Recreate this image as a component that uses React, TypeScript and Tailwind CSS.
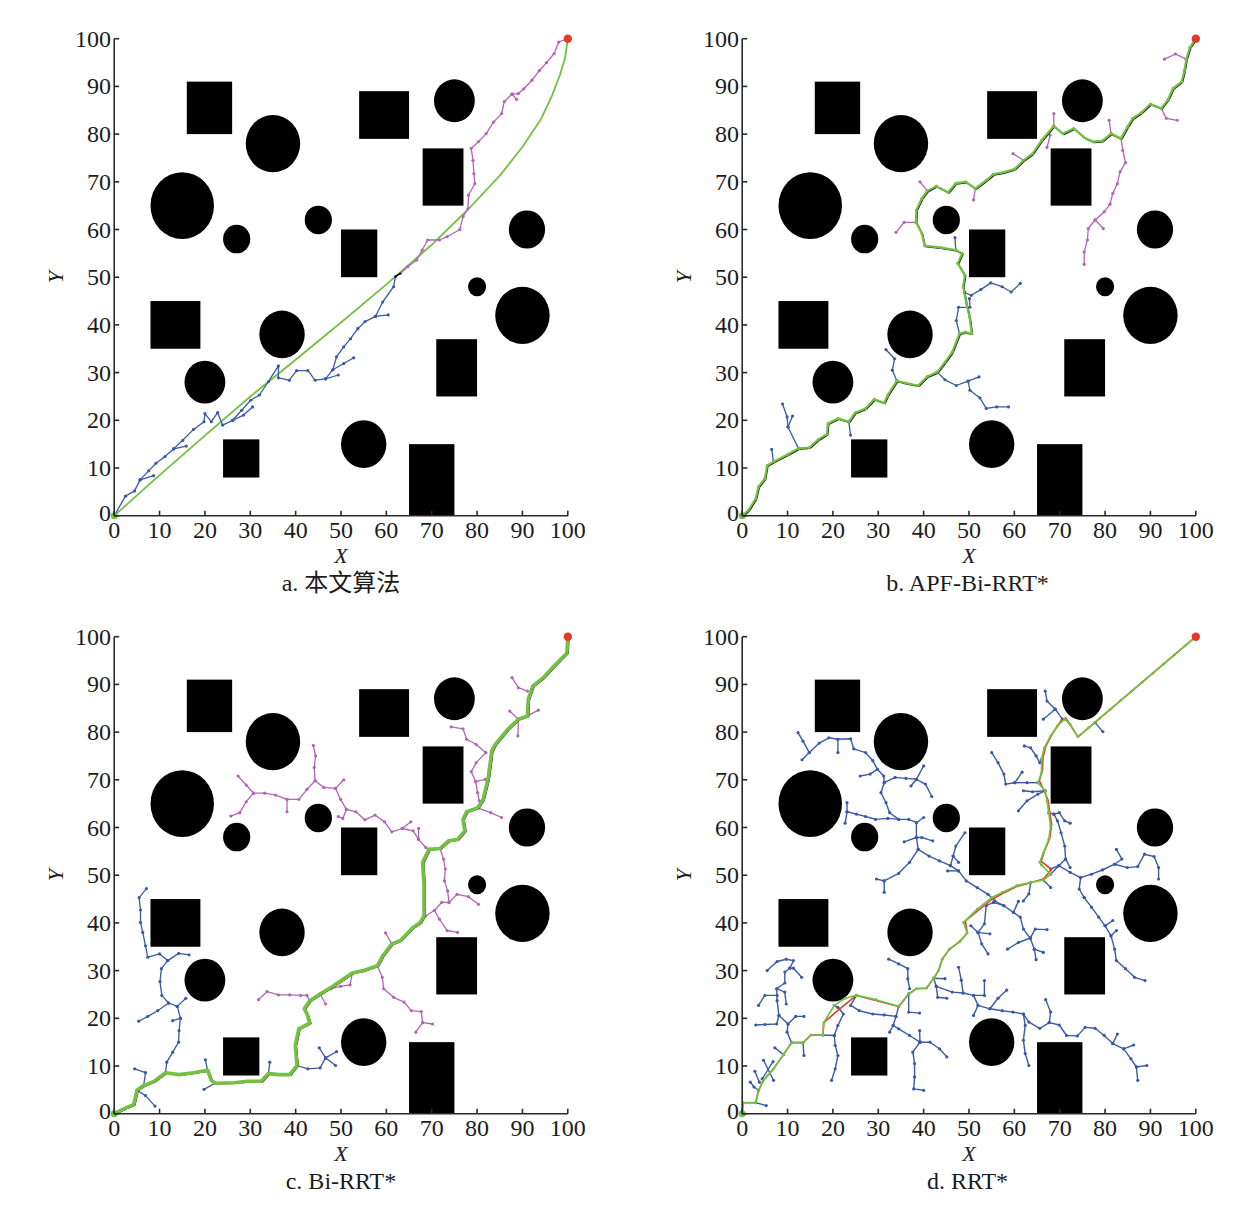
import React from "react";

type P = [number, number];
type Line = P[];

// plot frame, in px inside each panel's svg
const X0 = 114.2;
const Y0 = 515.7;
const SX = 4.536;
const SY = 4.77;
const px = (x: number) => X0 + x * SX;
const py = (y: number) => Y0 - y * SY;
const pts = (l: Line) =>
  l.map(([x, y]) => `${px(x).toFixed(1)},${py(y).toFixed(1)}`).join(" ");

const BLUE = "#3a5aa6";
const PURPLE = "#b264b8";
const GREEN = "#74c043";
const RED = "#e5392b";
const SERIF = "'Liberation Serif', 'Noto Sans CJK SC', serif";

const RECTS = [
  [16, 80, 26, 91],
  [54, 79, 65, 89],
  [68, 65, 77, 77],
  [50, 50, 58, 60],
  [8, 35, 19, 45],
  [71, 25, 80, 37],
  [24, 8, 32, 16],
  [65, 0, 75, 15],
];

const CIRCLES = [
  [35, 78, 6],
  [75, 87, 4.5],
  [15, 65, 7],
  [27, 58, 3],
  [45, 62, 3],
  [91, 60, 4],
  [80, 48, 2],
  [90, 42, 6],
  [37, 38, 5],
  [20, 28, 4.5],
  [55, 15, 5],
];

const TICKS = [0, 10, 20, 30, 40, 50, 60, 70, 80, 90, 100];

// ---------- a ----------
const greenA: Line = [
  [0, 0], [10, 8.5], [20, 16.8], [30, 25], [40, 32.7], [50, 40.5], [60, 48.5],
  [70, 56.8], [78, 64.2], [85, 71.3], [90, 77.3], [94, 83], [96.5, 88],
  [98.3, 92.5], [99.4, 96], [100, 100],
];
const blueA: Line[] = [
  [
    [0, 0], [2.5, 4.1], [4.5, 5.2], [5.7, 7.5], [7.6, 9.4], [9.2, 11], [11.2, 12.4],
    [13.1, 14], [15.1, 15.8], [17.5, 18.1], [19.8, 19.7], [20, 21.4], [21.4, 19.7],
    [22.8, 21.6], [23.9, 19], [26.1, 20], [28.1, 22.1], [30.1, 24.2], [32, 25.3],
    [34, 28.1], [36.2, 31.4], [36.2, 28.9], [38.6, 28.4], [40.2, 30.4], [42.7, 30.4],
    [44.3, 28.4], [46.6, 28.7], [48.2, 30.6], [49, 33.3], [50.6, 35.4], [52.1, 37.1],
    [53.7, 39.2], [55.3, 40.7], [57.6, 41.8], [59.2, 44.8], [61.6, 48], [62, 50.1],
  ],
  [[5.7, 7.5], [8.7, 8.4]],
  [[13.1, 14], [15.9, 14.6]],
  [[26.1, 20], [28.5, 21.1], [30.5, 22.8]],
  [[48.2, 30.6], [50.6, 31.9], [52.8, 33.1]],
  [[46.6, 28.7], [49.4, 29.5]],
  [[57.6, 41.8], [60.4, 42.1]],
];
const purpleA: Line[] = [
  [
    [100, 100], [98, 99.3], [97, 96.9], [95.3, 95], [93.7, 93.3], [92.1, 91.3],
    [90.3, 89.5], [89.1, 88.5], [87.7, 88.4], [86, 86.8], [85.4, 84.3], [83.6, 82.5],
    [82, 80.1], [80.3, 78.4], [78.7, 77], [79.1, 74.5], [79.3, 71.7], [79.5, 69.6],
    [78.1, 67.2], [78, 64.4], [76.9, 62.7], [76.2, 60], [73.4, 58.5], [71.7, 57.8],
    [69.1, 57.8], [67.9, 55.7], [66.7, 53.6], [64.7, 52.2], [63.1, 50.8],
  ],
  [[87.7, 88.4], [88.7, 87.3]],
];

// ---------- b ----------
const greenB: Line = [
  [0, 0], [1.4, 1.2], [3, 3.6], [3.6, 6.1], [5, 7.8], [5.5, 10.5], [6.9, 11.3],
  [10.1, 12.9], [12.4, 14.1], [14.8, 14.3], [16.8, 16], [18.7, 17.1], [18.9, 19.3],
  [21.1, 20.4], [23.5, 19.7], [24.9, 21.6], [27.2, 22.5], [29.1, 24.4], [31.3, 23.7],
  [32.1, 25.3], [34.1, 28.3], [36.1, 27.8], [38.8, 27.3], [40.8, 29.2], [43, 30.1],
  [44.7, 32.2], [46.3, 34.3], [47.9, 38.2], [49.1, 38.5], [50.6, 38.2], [50.1, 41.7],
  [49.4, 44.5], [48.7, 48], [49.1, 50.4], [47.5, 52.9], [48.5, 55], [47.1, 55.7],
  [43.9, 56.2], [40.2, 56.6], [39.6, 59.2], [38.3, 61.5], [38.4, 64.1], [39.6, 66.5],
  [40.8, 68.1], [42.8, 69.1], [45.4, 67.8], [47.1, 69.7], [49.3, 70], [51.4, 68.6],
  [53.8, 70.3], [55.4, 71.6], [58.1, 72.1], [60.1, 72.7], [62, 74.5], [64, 75.9],
  [66, 78.7], [68.7, 81.7], [70.7, 80.1], [73.1, 81.2], [75.4, 79.3], [77.4, 78.4],
  [79.4, 78.6], [81.3, 80.1], [83.5, 79.1], [84.9, 81.5], [86.1, 83.3], [88, 84.5],
  [90, 86.3], [92.4, 85.4], [93.9, 87.3], [95, 89.6], [96.9, 91], [97.5, 93.4],
  [97.9, 95.7], [98.7, 98.2], [100, 100],
];
const blueB: Line[] = [
  [[6.9, 11.3], [6.5, 13.9]],
  [[12.4, 14.1], [10.1, 18.6], [9.9, 20.7], [8.9, 23.4]],
  [[10.1, 18.6], [11.1, 20.9]],
  [[23.5, 19.7], [23.9, 16.9]],
  [[34.1, 28.3], [33.1, 30.5], [33.6, 32.9], [31.7, 34.8]],
  [[43, 30.1], [44.7, 28.5], [47.2, 27.3], [49.8, 28.2], [52.2, 29.1]],
  [[49.8, 28.2], [50.2, 26.3], [52.4, 24.7], [53.8, 22.5], [56.1, 22.8], [58.7, 22.8]],
  [[47.9, 38.2], [47.2, 40.9], [47.7, 43.7], [50.2, 43.7], [50.1, 45.5]],
  [[49, 46.8], [50.5, 46.2], [52.6, 47.4], [54.8, 48.8], [57.3, 48], [59.3, 46.9], [61.3, 48.7]],
  [[47.1, 55.7], [46.9, 58.3]],
];
const purpleB: Line[] = [
  [[38.3, 61.5], [35.7, 61.5], [33.9, 59.4]],
  [[40.8, 68.1], [39.2, 70]],
  [[51.4, 68.6], [51, 66.2]],
  [[62, 74.5], [59.7, 75.9]],
  [[68.7, 81.7], [68.7, 84.3]],
  [[67.9, 79.8], [67.2, 77.2]],
  [[81.3, 80.1], [80.9, 82.9]],
  [
    [83.5, 79.1], [83.9, 76.6], [84.5, 74], [83.3, 72.1], [82.7, 69.6], [81.7, 67.6],
    [81.1, 65.3], [79.8, 63.7], [77.8, 62], [76.3, 60.2], [76.1, 57.8], [75.4, 55.3],
    [75.4, 52.7],
  ],
  [[77.8, 62], [79.6, 60.2]],
  [[92.4, 85.4], [93.5, 83.3], [95.9, 82.9]],
  [[97.9, 95.7], [95.5, 96.8], [93.1, 95.7]],
];

// ---------- c ----------
const greenC: Line = [
  [0, 0], [2.5, 1.2], [4.3, 1.9], [5, 4.9], [6.5, 5.9], [8.8, 6.8], [11.3, 8.6],
  [14.3, 8.2], [17.5, 8.6], [20.6, 9.1], [21.4, 7], [22.2, 6.4], [26.5, 6.5],
  [29.3, 6.8], [32.4, 6.8], [34, 8.4], [36.4, 8.2], [38.7, 8.2], [40.3, 10.1],
  [39.9, 14.3], [40.7, 17.8], [43.1, 19], [42.5, 20.9], [41.9, 22], [43.1, 23.7],
  [45.4, 25.1], [48.2, 26.7], [50.6, 28.3], [52.5, 29.5], [54.9, 30], [58, 31],
  [59.2, 33.1], [61.2, 35.6], [63.1, 36.3], [65.9, 39.1], [67.5, 40.1], [68.3, 41.5],
  [68.3, 47.8], [68, 52.7], [69.4, 55.4], [71.8, 55.6], [73.7, 57.2], [75.7, 57.5],
  [77.3, 59.3], [76.9, 61.7], [77.7, 63.3], [80.1, 64.1], [81.3, 65.9], [82.4, 70.1],
  [83, 74.3], [83.2, 76], [84, 77.4], [86.8, 80.6], [89.1, 82.7], [91.1, 83.4],
  [91.3, 86.9], [92.3, 89.7], [94.6, 91.4], [97, 93.9], [99.8, 96.6], [100, 100],
];
const blueC: Line[] = [
  [
    [11.3, 8.6], [11.6, 10.8], [12.9, 12.9], [14.2, 15], [14.3, 17.4], [14.6, 20],
    [13.9, 22.5], [12, 23.2], [10.5, 24.8], [10.1, 27.7], [10.4, 30.4], [11.8, 32.1],
    [10, 33.5], [7.4, 32.8], [6.9, 35.2], [6.3, 38], [5.8, 40.1], [5.8, 42.7],
    [5.5, 45.3], [7.1, 47.2],
  ],
  [[11.8, 32.1], [14.2, 33.6], [16.5, 33.3]],
  [[13.9, 22.5], [15.8, 24.2]],
  [[12, 23.2], [9.6, 21.6], [7.4, 20.4], [5.4, 19.4]],
  [[14.6, 20], [12.9, 19.5]],
  [[6.5, 5.9], [6.9, 8.6], [4.5, 9.4]],
  [[5, 4.9], [6.9, 3.8], [9, 1.6]],
  [[20.6, 9.1], [20.1, 11.3]],
  [[22.2, 6.4], [19.8, 5.1]],
  [[34, 8.4], [34.3, 10.8]],
  [[40.3, 10.1], [42.7, 9.4], [45.4, 9.6], [46.6, 11.7], [49, 13]],
  [[46.6, 11.7], [45.2, 13.8]],
  [[46.6, 11.7], [48.8, 10.1]],
];
const purpleC: Line[] = [
  [[91.1, 83.4], [93.5, 84.6]],
  [[89.1, 82.7], [87.2, 84.4]],
  [[89.1, 82.7], [89, 79.2]],
  [[91.1, 88.6], [89.1, 89.3], [87.7, 91.4]],
  [[81.9, 75.7], [79.8, 77.4], [77.7, 78.5], [76.9, 80.7], [74.3, 81.1]],
  [[81.9, 75.7], [79.8, 73.6], [78.7, 71.7], [79.7, 69.6], [80.1, 67.3], [80.5, 65.6]],
  [[79.7, 69.6], [81.8, 70.1]],
  [[80.1, 64.1], [83, 63.1], [85.4, 62.1]],
  [
    [69.4, 55.4], [68.7, 55.8], [67.1, 57.5], [65.9, 59.3], [63.5, 59.8], [61.2, 59.1],
    [59.6, 61.2], [57.5, 62.6], [55.3, 61.6], [53.3, 63.3], [51.2, 63.8], [50.4, 61.9],
    [49.4, 62.3],
  ],
  [
    [51.2, 63.8], [49.9, 65.9], [48.8, 68.2], [46.2, 68.4], [44.3, 69.8], [44.1, 72.6],
    [44.4, 75], [43.9, 77.2],
  ],
  [[48.8, 68.2], [50.6, 70]],
  [
    [44.3, 69.8], [42.5, 68], [40.7, 65.9], [38.1, 65.9], [35.6, 66.8], [33.2, 67.2],
    [30.7, 67.2], [29.1, 68.9], [27.3, 70.8],
  ],
  [[38.1, 65.9], [38.1, 63.3]],
  [[30.7, 67.2], [29.1, 65.4], [27.7, 63.1], [25.7, 62.4]],
  [[63.5, 59.8], [65.4, 61.2]],
  [[67.1, 57.5], [67.1, 59.8]],
  [
    [71.8, 55.6], [72.6, 53.4], [73, 51.3], [72.8, 48.8], [73.5, 46.7], [73.8, 44.3],
    [72.2, 44.3], [70.6, 42.6], [71.7, 40.8], [73.4, 38.4], [75.7, 38],
  ],
  [[73.8, 44.3], [75.6, 46], [78.1, 45.5], [80.3, 43.9]],
  [[70.6, 42.6], [68.7, 41.5]],
  [
    [58, 31], [59.1, 28.6], [59.4, 26.2], [61.6, 24.4], [63.9, 23.4], [65.5, 21.6],
    [67.7, 21.4], [68, 19.1], [70.2, 18.8],
  ],
  [[68, 19.1], [66.5, 17.1]],
  [[61.2, 35.6], [59.8, 37.9]],
  [[52.5, 29.5], [52, 27], [49.9, 26.7], [47.8, 26.2]],
  [[45.4, 25.1], [46.6, 23]],
  [
    [43.1, 23.7], [42.5, 24.8], [41.1, 24.8], [38.7, 24.9], [36.2, 24.9], [33.7, 25.6],
    [31.8, 23.9],
  ],
];

// ---------- d ----------
const tail: Line = Array.from({ length: 11 }, (_, i) => {
  const t = (i + 1) / 11;
  return [74 + 26 * t, 79 + 21 * t] as P;
});
const greenD: Line = [
  [0, 0], [0.2, 2.3], [3, 2.3], [3.6, 4.9], [4.7, 7], [6.9, 9.4], [9.1, 12.4],
  [10.9, 14.9], [13.4, 14.9], [15.2, 16.5], [17.8, 16.5], [18, 19.1], [20.3, 22.7],
  [22.7, 24.2], [25.2, 24.8], [29.5, 23.9], [34.5, 22.5], [36.7, 25.1], [38.4, 26.2],
  [40.6, 26.3], [42.2, 28.4], [43.3, 30], [44.1, 32.4], [45.7, 34.5], [48, 36.1],
  [49.6, 37.9], [48.8, 40.1], [51.8, 42.9], [55, 45.3], [57.3, 46.4], [60.5, 47.8],
  [63.6, 48.5], [66.4, 49], [68, 50.2], [66, 52.1], [65.6, 52.7], [66.4, 54.7],
  [67.6, 57.5], [68, 60.3], [67.6, 63.1], [67.2, 65.6], [66.8, 67.7], [65.2, 69.4],
  [66, 71.5], [66, 74.3], [66.6, 76.7], [68, 79.2], [69.5, 81.3], [71.1, 82.7],
  [72.3, 81.6], [74, 79], ...tail,
];
const redD: Line = [
  [0, 0], [0.2, 2.3], [3, 2.3], [3.6, 4.9], [4.7, 7], [6.9, 9.4], [9.1, 12.4],
  [10.9, 14.9], [13.4, 14.9], [15.2, 16.5], [17.8, 16.5], [18, 19.1], [21.5, 22],
  [25.2, 24.8], [34.5, 22.5], [36.7, 25.1], [38.4, 26.2], [40.6, 26.3], [42.2, 28.4],
  [43.3, 30], [44.1, 32.4], [45.7, 34.5], [48, 36.1], [49.6, 37.9], [49.2, 40.4],
  [52, 42.6], [55, 44.9], [57.3, 46.1], [60.5, 47.6], [63.6, 48.4], [66.4, 49.2],
  [68.2, 51.2], [65.9, 52.9], [66.6, 55], [67.8, 57.7], [68.2, 60.5], [67.8, 63.3],
  [67.4, 65.8], [66.5, 67.9], [65.5, 69.8], [66.2, 72], [66.3, 74.6], [67, 77.2],
  [68.6, 80], [70.3, 82.4], [71.3, 83], [72.4, 81.4], [74, 79], [100, 100],
];
const blueD: Line[] = [
  [[3, 2.3], [5.3, 1.7]],
  [[3.6, 4.9], [2.6, 5.6], [1.8, 6.6]],
  [[3.8, 6.6], [2.8, 8.9]],
  [[4.7, 11.2], [6.9, 7]],
  [[4.4, 7.3], [6.8, 10.9]],
  [[9.1, 12.4], [7.2, 13.8]],
  [
    [10.9, 14.9], [9.9, 17.1], [10.1, 18.8], [8.1, 20.6], [7.7, 23.7], [7.6, 26.2],
    [9.4, 27.4], [9.4, 29.7], [10.5, 30.5], [11.3, 32.1], [9.7, 32.4], [7.7, 31.9],
    [5.5, 30],
  ],
  [[10.5, 30.5], [11.3, 30.5], [13.1, 28.6]],
  [[7.6, 26.2], [9.4, 25.5], [9.7, 23]],
  [[7.7, 24.8], [5, 24.8], [3.6, 22.7]],
  [[8.1, 20.6], [7.6, 18.8], [5, 18.7], [3, 18.6]],
  [[10.1, 18.8], [11.8, 20.4], [13.6, 20.4]],
  [[13.4, 14.9], [13.6, 12.2]],
  [[17.8, 16.5], [20.3, 16.4], [20.5, 14.3], [21.1, 12.2], [20.5, 9.4], [19.7, 7]],
  [[20.3, 22.7], [21.1, 22.3], [22.3, 20.9], [21.1, 18.5], [20.3, 16.4]],
  [
    [25.2, 24.8], [23.9, 22.7], [25.8, 21.6], [28.8, 20.9], [31.3, 20.7], [33.9, 20.4],
    [34.5, 22.5],
  ],
  [[33.9, 20.4], [33.3, 18.5], [32.5, 17.1]],
  [
    [33.3, 18.5], [34.5, 17.8], [36.9, 16.4], [39.2, 15], [37.6, 12.9], [38, 10.5],
    [38, 7.7], [37.8, 5.2], [40, 4.9],
  ],
  [[39.2, 15], [41.4, 15], [43.5, 13.6], [45.1, 11.9]],
  [[39.2, 15], [39.1, 17.4]],
  [[36.7, 25.1], [36.7, 21.3], [39.1, 21.1]],
  [[36.9, 26.2], [36.5, 28.3], [36.5, 30.4], [34.5, 31.4], [32.3, 32.4]],
  [[42.2, 28.4], [42.8, 26.7], [43.1, 24.4], [45.1, 24.2]],
  [[42.2, 28.4], [44.7, 28.3]],
  [
    [42.8, 26.7], [46.3, 25.5], [48.7, 25.3], [51, 24.8], [52, 22.7], [54.6, 22],
    [57.3, 21.6], [59.7, 21.3], [62, 20.9], [63.2, 19.2], [65.6, 17.9], [67.7, 19.1],
    [69.9, 18.6], [71.5, 16.4], [73.9, 16.3], [75.6, 18.1], [77.8, 17.9], [79.8, 16.4],
    [81.7, 14.7], [84.1, 13.6], [85.7, 11.5], [86.9, 9.8], [87.2, 7],
  ],
  [[86.9, 9.8], [89.2, 10.1]],
  [[84.1, 13.6], [86.3, 14.4]],
  [[81.7, 14.7], [82.7, 16.7]],
  [[62, 20.9], [62.4, 18.5], [62, 15.4], [62.4, 12.6], [63.2, 10.1]],
  [[67.7, 19.1], [68, 21.3], [66.9, 23.9]],
  [[48.7, 25.3], [48.3, 28], [47.7, 30.7]],
  [[51, 24.8], [53.4, 24.8], [53.4, 27.9]],
  [[54.6, 22], [56.4, 24.2], [58.3, 25.9]],
  [[52, 22.7], [51, 20.6]],
  [
    [55.4, 44.3], [57.7, 43.6], [59.8, 42.2], [61.3, 41.2], [62, 38.7], [63.5, 36.8],
    [64.4, 34.5], [66.4, 33.8],
  ],
  [[63.5, 36.8], [64.6, 38.7], [67.2, 38.6]],
  [[63.5, 36.8], [60.9, 35.9], [58.5, 34.5]],
  [[64.4, 34.5], [64.8, 32.3]],
  [[55.4, 44.3], [53.8, 43.6], [53.4, 39.8], [52, 38], [52.8, 35.6], [54.2, 33.5]],
  [[52, 38], [50.4, 39.4]],
  [[52, 38], [54.6, 37.7]],
  [[59.8, 42.2], [60.9, 44.5]],
  [
    [75.4, 45.3], [77, 43.3], [78.6, 41.2], [80, 39.4], [81.3, 37.3], [82.1, 34.5],
    [82.5, 32.1], [84.5, 30.4], [86.5, 28.6], [88.8, 27.9],
  ],
  [[80, 39.4], [81.7, 40.5]],
  [[81.3, 37.3], [82.5, 38.4]],
  [[12.3, 79.9], [13.4, 78.1], [14.8, 75.7], [13.2, 74.2]],
  [
    [14.8, 75.7], [17, 77.7], [19.1, 78.8], [21.1, 78.5], [23.9, 78.6], [24.6, 76.5],
    [27.2, 75.7], [28.8, 74], [29.8, 72.2], [31.2, 70.8], [31.3, 69.4], [30.6, 67.3],
    [31.7, 65.2], [32.5, 63.1], [34.5, 61.7], [36.7, 61.7], [38.4, 61], [38.4, 57.9],
    [38.8, 55.4], [41.2, 54], [43.5, 53], [45.9, 52], [47.7, 50.9], [49.4, 48.8],
    [51.8, 47.4], [54.2, 46], [55.7, 44.6], [57.7, 43.6],
  ],
  [[21.1, 78.5], [21.1, 75.7]],
  [[29.8, 72.2], [28.2, 71.2], [26, 70.8]],
  [[31.3, 69.4], [33.7, 70.5], [36.1, 70.3], [38.4, 70.1], [40, 72.9]],
  [[38.4, 70.1], [37.2, 68.7]],
  [[38.4, 70.1], [40.4, 69.1], [41.8, 66.5]],
  [
    [34.5, 61.7], [32.1, 61.9], [29.4, 61.7], [27.2, 62.3], [25.2, 62.8], [23.1, 63.3],
    [22.7, 60.9],
  ],
  [[23.1, 63.3], [23.1, 65.2]],
  [[38.4, 61], [40, 62.1]],
  [[38.4, 57.9], [35.7, 57]],
  [[38.4, 57.9], [39.6, 57.9], [42, 57.2]],
  [[45.9, 52], [46.5, 54], [47.1, 56.1], [49.1, 58.9]],
  [[46.5, 54], [47.7, 52.7]],
  [[47.7, 50.9], [45.3, 50.9]],
  [[38.8, 55.4], [36.9, 52.7], [34.5, 50.4], [31.3, 48.8], [29.6, 49.2]],
  [[31.3, 48.8], [31.3, 46.4]],
  [[66.8, 88.6], [67.2, 86.5], [69, 84.8], [70.6, 82.7]],
  [[69, 84.8], [66.4, 82.7]],
  [[62.2, 77.1], [63.6, 76.7], [64.8, 75], [65.6, 73.6], [66, 74.3]],
  [[55, 75.7], [56.4, 73.6], [57.7, 71.2], [58.1, 69.1], [60.1, 69.4], [61.7, 71.6]],
  [[60.1, 69.4], [62.8, 69.4], [65.2, 69.4]],
  [[62, 67.7], [64, 67.5], [66.8, 67.7]],
  [[60.9, 63.5], [62.8, 65.6], [65.2, 67], [66.8, 67.7]],
  [[77.8, 82], [79.5, 80.1]],
  [[67.6, 63.1], [68.7, 62.8], [69.9, 63.1], [71.1, 61.4], [72.3, 60.9]],
  [
    [68.7, 62.8], [69.5, 61.4], [70.3, 58.9], [71.1, 56.1], [71.3, 53.4], [69.8, 52],
    [68, 51.3],
  ],
  [[71.3, 53.4], [72.3, 51.6]],
  [
    [68, 50.2], [69.8, 52], [72.3, 50.6], [74.6, 49.5], [77, 50.2], [79.4, 51.1],
    [82.1, 52.3], [84.9, 51.6], [87.2, 51.8], [88.7, 54.4], [90.8, 53.9], [91.8, 51.6],
    [91.8, 49.2],
  ],
  [[82.1, 52.3], [83.7, 53.4], [82.5, 55.4]],
  [[74.6, 49.5], [74.3, 47.1], [75.4, 45.3]],
  [[63.6, 48.5], [63.2, 46.1], [62, 44.6]],
  [[66.4, 49], [68, 47.4]],
];

const Tree = ({
  lines,
  color,
  width = 1.3,
  r = 1.6,
}: {
  lines: Line[];
  color: string;
  width?: number;
  r?: number;
}) => (
  <g>
    {lines.map((l, i) => (
      <polyline
        key={i}
        points={pts(l)}
        fill="none"
        stroke={color}
        strokeWidth={width}
        strokeLinejoin="round"
      />
    ))}
    {lines.flatMap((l, i) =>
      l.map(([x, y], j) => (
        <circle key={`${i}-${j}`} cx={px(x)} cy={py(y)} r={r} fill={color} />
      ))
    )}
  </g>
);

const Path = ({ line, color, width }: { line: Line; color: string; width: number }) => (
  <polyline
    points={pts(line)}
    fill="none"
    stroke={color}
    strokeWidth={width}
    strokeLinejoin="round"
    strokeLinecap="round"
  />
);

const Plot = ({ caption, children }: { caption: string; children: React.ReactNode }) => (
  <div className="flex flex-col">
    <svg width={625} height={568} className="block" fontFamily={SERIF}>
      {RECTS.map(([x1, y1, x2, y2], i) => (
        <rect
          key={i}
          x={px(x1)}
          y={py(y2)}
          width={(x2 - x1) * SX}
          height={(y2 - y1) * SY}
          fill="#000"
        />
      ))}
      {CIRCLES.map(([cx, cy, r], i) => (
        <ellipse key={i} cx={px(cx)} cy={py(cy)} rx={r * SX} ry={r * SY} fill="#000" />
      ))}
      {children}
      <circle cx={px(0)} cy={py(0)} r={3.5} fill={GREEN} />
      <circle cx={px(100)} cy={py(100)} r={4.2} fill={RED} />
      <g stroke="#2a2a2a" strokeWidth={1.6} fill="none">
        <line x1={px(0)} y1={py(0)} x2={px(0)} y2={py(100)} />
        <line x1={px(0)} y1={py(0)} x2={px(100)} y2={py(0)} />
        {TICKS.map((t) => (
          <g key={t}>
            <line x1={px(0)} y1={py(t)} x2={px(0) + 5} y2={py(t)} />
            <line x1={px(t)} y1={py(0)} x2={px(t)} y2={py(0) - 5} />
          </g>
        ))}
      </g>
      <g fill="#1c1c1c" fontSize={24}>
        {TICKS.map((t) => (
          <text key={`y${t}`} x={111} y={py(t) + (t === 0 ? 5 : 8)} textAnchor="end">
            {t}
          </text>
        ))}
        {TICKS.map((t) => (
          <text key={`x${t}`} x={px(t)} y={538} textAnchor="middle">
            {t}
          </text>
        ))}
        <text x={px(50)} y={563} textAnchor="middle" fontStyle="italic" fontSize={22}>
          X
        </text>
        <text
          transform={`translate(63,${py(50)}) rotate(-90)`}
          textAnchor="middle"
          fontStyle="italic"
          fontSize={22}
        >
          Y
        </text>
      </g>
    </svg>
    <div className="h-[30px] pl-[54px] text-center font-[family-name:'Liberation_Serif','Noto_Sans_CJK_SC',serif] text-[24px] leading-[30px] text-[#1c1c1c]">
      {caption}
    </div>
  </div>
);

const App = () => {
  return (
    <div className="grid h-[1215px] w-[1253px] grid-cols-[628px_625px] content-start bg-white">
      <Plot caption="a. 本文算法">
        <Path line={greenA} color={GREEN} width={1.8} />
        <Tree lines={blueA} color={BLUE} />
        <Tree lines={purpleA} color={PURPLE} />
        <Path line={[[62, 50.1], [63.1, 50.8]]} color="#000" width={1.6} />
      </Plot>
      <Plot caption="b. APF-Bi-RRT*">
        <Tree lines={blueB} color={BLUE} />
        <Tree lines={purpleB} color={PURPLE} />
        <g transform="translate(0.8,0.9)">
          <Path line={greenB} color="#111" width={1.4} />
        </g>
        <Tree lines={[greenB]} color={GREEN} width={2.2} r={1.5} />
      </Plot>
      <Plot caption="c. Bi-RRT*">
        <Tree lines={blueC} color={BLUE} />
        <Tree lines={purpleC} color={PURPLE} />
        <g transform="translate(1.2,0.6)">
          <Path line={greenC} color="#111" width={1.5} />
        </g>
        <Path line={greenC} color={GREEN} width={3.6} />
      </Plot>
      <Plot caption="d. RRT*">
        <Tree lines={blueD} color={BLUE} width={1.4} />
        <Path line={redD} color={RED} width={1.6} />
        <Tree lines={[greenD]} color={GREEN} width={1.7} r={1.4} />
      </Plot>
    </div>
  );
};

export default App;
